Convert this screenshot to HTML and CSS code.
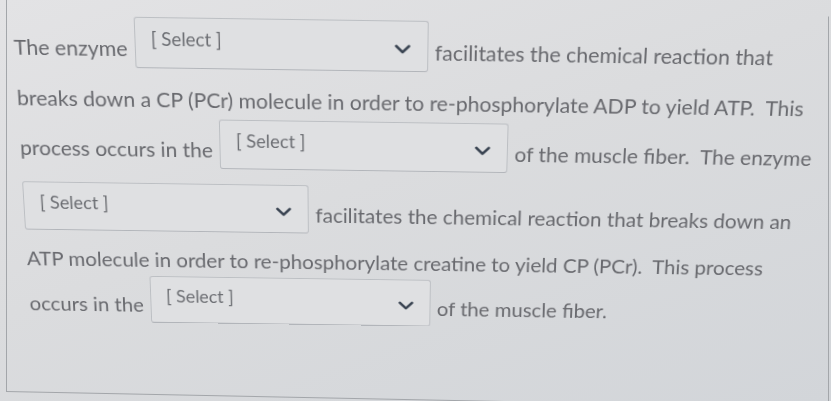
FILE: index.html
```html
<!DOCTYPE html>
<html lang="en">
<head>
<meta charset="utf-8">
<title>Quiz question</title>
<link rel="stylesheet" href="styles.css">
</head>
<body>
<div class="frame">
  <div class="content">
    <div class="row">
      <span class="t">The enzyme</span>
      <div class="select"><span class="sel-text">[ Select ]</span><svg class="chev" viewBox="0 0 16 10" width="16" height="10"><path d="M1.5 1.8 L8 8 L14.5 1.8" fill="none" stroke="#3a4452" stroke-width="2.6" stroke-linecap="round" stroke-linejoin="round"/></svg></div>
      <span class="t">facilitates the chemical reaction that</span>
    </div>
    <div class="row">
      <span class="t">breaks down a CP (PCr) molecule in order to re-phosphorylate ADP to yield ATP.&nbsp; This</span>
    </div>
    <div class="row">
      <span class="t">process occurs in the</span>
      <div class="select"><span class="sel-text">[ Select ]</span><svg class="chev" viewBox="0 0 16 10" width="16" height="10"><path d="M1.5 1.8 L8 8 L14.5 1.8" fill="none" stroke="#3a4452" stroke-width="2.6" stroke-linecap="round" stroke-linejoin="round"/></svg></div>
      <span class="t">of the muscle fiber.&nbsp; The enzyme</span>
    </div>
    <div class="row row-gap">
      <div class="select"><span class="sel-text">[ Select ]</span><svg class="chev" viewBox="0 0 16 10" width="16" height="10"><path d="M1.5 1.8 L8 8 L14.5 1.8" fill="none" stroke="#3a4452" stroke-width="2.6" stroke-linecap="round" stroke-linejoin="round"/></svg></div>
      <span class="t">facilitates the chemical reaction that breaks down an</span>
    </div>
    <div class="row row-short">
      <span class="t">ATP molecule in order to re-phosphorylate creatine to yield CP (PCr).&nbsp; This process</span>
    </div>
    <div class="row">
      <span class="t">occurs in the</span>
      <div class="select"><span class="sel-text">[ Select ]</span><svg class="chev" viewBox="0 0 16 10" width="16" height="10"><path d="M1.5 1.8 L8 8 L14.5 1.8" fill="none" stroke="#3a4452" stroke-width="2.6" stroke-linecap="round" stroke-linejoin="round"/></svg></div>
      <span class="t">of the muscle fiber.</span>
    </div>
  </div>
</div>
</body>
</html>
```
FILE: styles.css
```css
html, body {
  margin: 0;
  padding: 0;
  height: 100%;
  overflow: hidden;
}
body {
  background: linear-gradient(160deg, #e3e3e5 0%, #dbdcde 45%, #d2d5d9 100%);
  font-family: Lato, "Open Sans", sans-serif;
  color: #68696e;
}
.frame {
  box-sizing: border-box;
  margin-left: 6px;
  width: 823px;
  height: 392px;
  border: 1px solid #a3a6aa;
  border-top: none;
  transform: skewY(1.15deg);
  transform-origin: 0 0;
}
/* photo perspective: shear + slight recession toward the bottom */
.content {
  padding: 15px 0 0 4px;
  transform: matrix3d(1, -0.006, 0, 0, 0.062, 1, 0, 0.00018, 0, 0, 1, 0, 0, 0, 0, 1);
  transform-origin: 0 0;
}
.row {
  display: flex;
  align-items: center;
  gap: 7px;
  height: 52px;
}
.row-gap {
  margin-top: 16px;
}
.row-short {
  height: 49px;
}
.t {
  font-size: 21.5px;
  padding-top: 12px;
  white-space: nowrap;
}
.select {
  box-sizing: border-box;
  width: 296px;
  height: 52px;
  flex: none;
  display: flex;
  justify-content: space-between;
  align-items: flex-start;
  padding: 9px 17px 0 16px;
  border: 1px solid #bcbfc3;
  border-bottom-color: #b2b5ba;
  border-radius: 3px;
  background: #dfe0e2;
}
.sel-text {
  font-size: 18.8px;
  color: #6c6e73;
}
.chev {
  margin-top: 14px;
}
```
